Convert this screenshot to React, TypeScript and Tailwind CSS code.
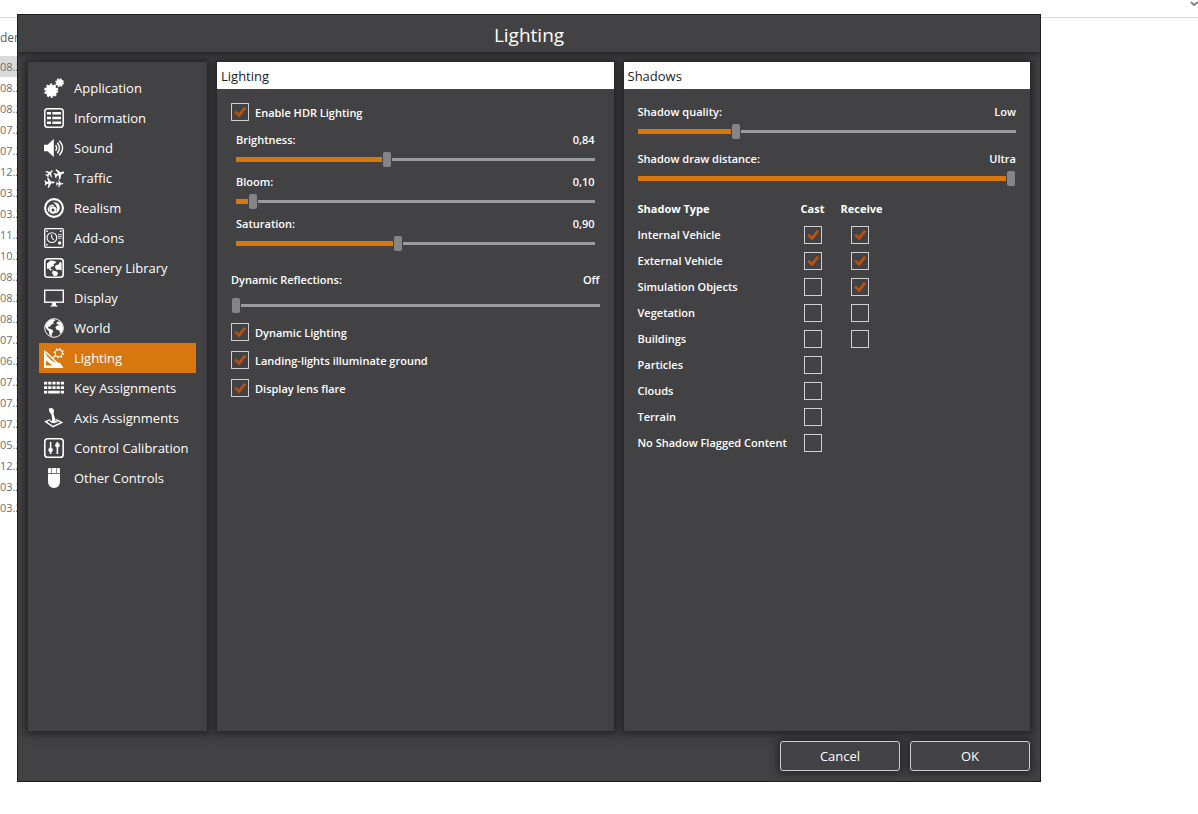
import { useState } from 'react';
import type { ReactNode } from 'react';

const PLANE =
  'M9.3 4.2 L6.4 4 L4 0.2 L2.8 0.2 L4 4 L2.2 4 L1.1 2.7 L0.1 2.7 L0.8 5 L0.1 7.3 L1.1 7.3 L2.2 6 L4 6 L2.8 9.8 L4 9.8 L6.4 6 L9.3 5.8 Q10.6 5 9.3 4.2 Z';

const icons: Record<string, ReactNode> = {
  Application: (
    <>
      <circle cx="7.2" cy="12.6" r="5.8" fill="currentColor" stroke="none" />
      <circle cx="7.2" cy="12.6" r="6.2" strokeWidth="1.8" strokeDasharray="2.2 1.7" />
      <circle cx="15.6" cy="4.6" r="3.4" fill="currentColor" stroke="none" />
      <circle cx="15.6" cy="4.6" r="3.7" strokeWidth="1.3" strokeDasharray="1.7 1.2" />
    </>
  ),
  Information: (
    <>
      <rect x="0.8" y="0.8" width="18.4" height="18.4" rx="2.8" strokeWidth="1.5" />
      <path d="M3 5.3h4M3 10h4M3 14.7h4M8.3 5.3H17M8.3 10H17M8.3 14.7H17" strokeWidth="2.5" />
    </>
  ),
  Sound: (
    <>
      <path d="M0 6.8h3.6L9.8 1v18L3.6 13.2H0z" fill="currentColor" stroke="none" />
      <path d="M11.6 7.2q2 2.8 0 5.6M13.4 4.8q4 5.2 0 10.4M15.4 2.8q6.4 7.2 0 14.4" strokeWidth="1.4" />
    </>
  ),
  Traffic: (
    <g fill="currentColor" stroke="none">
      <path d={PLANE} transform="translate(-0.4 5.4) rotate(-45) scale(0.85)" />
      <path d={PLANE} transform="translate(8.4 2.6) rotate(-20) scale(1.1)" />
      <path d={PLANE} transform="translate(0 9.8) rotate(-4) scale(1.05)" />
      <path d={PLANE} transform="translate(12 12) scale(0.75)" />
    </g>
  ),
  Realism: (
    <>
      <circle cx="10" cy="10" r="8.9" strokeWidth="2.1" />
      <circle cx="9" cy="12" r="2.6" strokeWidth="2.2" />
      <path d="M9.2 4.4C14.6 3.8 17.2 8.6 15.2 12.4Q13.8 15 11.2 15.6C14.4 12.4 13.6 7 9.2 4.4z" fill="currentColor" stroke="none" />
      <path d="M4.8 13.6C3.4 9.4 6 6.6 9.8 7.4" strokeWidth="1.3" />
    </>
  ),
  'Add-ons': (
    <>
      <rect x="0.7" y="0.7" width="18.6" height="18.6" rx="1.2" strokeWidth="1.3" />
      <circle cx="7.9" cy="9.6" r="4.9" strokeWidth="1.1" />
      <path d="M7.4 6.6l.6 3.4 1.8 2" strokeWidth="1.1" />
      <path d="M14 6.6h3.6M14 8.4h3.6M14 10.2h3.6" strokeWidth="0.8" />
      <g fill="currentColor" stroke="none">
        <circle cx="3" cy="3.2" r="0.9" />
        <circle cx="16.8" cy="3.2" r="0.9" />
        <circle cx="3" cy="16.8" r="0.9" />
        <circle cx="15.6" cy="15" r="1.7" />
      </g>
    </>
  ),
  'Scenery Library': (
    <>
      <rect x="0.8" y="0.8" width="18.4" height="18.4" rx="2.8" strokeWidth="1.6" />
      <path
        d="M3 5.4L6.6 2.6L10.6 3L12.4 4.4L9.4 6.2L10.2 8L7.4 8.8L6.2 11L8.6 11.6L6.6 12.8L4.4 10.6L3 11ZM11.6 7.2L14.6 6.4L16.2 3.4L17.6 5V12.6L15.4 11.6L12.8 12L11 9.8ZM8.8 12.4L12.6 13.4L14.2 15.2L12.6 18H9.8L8 15Z"
        fill="currentColor"
        stroke="none"
      />
    </>
  ),
  World: (
    <>
      <circle cx="10" cy="10" r="9.3" strokeWidth="1" />
      <path
        d="M1.2 8.4Q3.4 1.8 9.6 0.9L11.4 2.4L9 4L9.8 5.8L7.2 6.6L6.2 8.6L3.8 8.8L4.6 10.6L8 11.4L9.4 13.4L7.8 15.4L7.6 18.8L5.4 16.8L5 13.6L2.6 11ZM12.2 5.4L14 3.2L16.8 4.2Q19.4 7 19.2 10.8L17.6 14.4L16 15.8L15.4 12.4L12.4 11.6L11.4 9.2L13.2 7.4L15.6 7.2Z"
        fill="currentColor"
        stroke="none"
      />
    </>
  ),
  Display: (
    <>
      <rect x="0.7" y="2.2" width="18.6" height="12" strokeWidth="1.4" />
      <path d="M8 14.5h4v2.3l2 1.7H6l2-1.7z" fill="currentColor" stroke="none" />
    </>
  ),
  Lighting: (
    <>
      <path d="M0 0.8C1.6 8.4 8.6 16 15.8 14.6L19.6 20H0z" fill="currentColor" stroke="none" />
      <path d="M2 12.4V17.6H8.4z" fill="#d9770f" stroke="none" />
      <path d="M1.4 3.6L14.8 16.4M8.2 10.6l3.8-3.4" strokeWidth="1.4" />
      <circle cx="14.8" cy="5.2" r="3.6" strokeWidth="1.1" />
      <circle cx="14.8" cy="5.2" r="4.6" strokeWidth="1.2" strokeDasharray="1.4 2.21" />
    </>
  ),
  'Key Assignments': (
    <path
      d="M0 5.2h3.2M4.2 5.2h3.2M8.4 5.2h3.2M12.6 5.2h3.2M16.8 5.2H20M0 9.7h3.2M4.2 9.7h3.2M8.4 9.7h3.2M12.6 9.7h3.2M16.8 9.7H20M0 14.2h3.2M4.2 14.2h11.6M16.8 14.2H20"
      strokeWidth="2.8"
    />
  ),
  'Axis Assignments': (
    <>
      <path d="M4.8 0.6L8 0L10 2L9.6 6L11.8 12.6L8.4 13.4L7.4 6.6L5.4 4z" fill="currentColor" stroke="none" />
      <path d="M6.4 11.6L1.6 13.6L9 18.6L17.8 14.4L12.2 11.6" strokeWidth="1.4" />
      <path d="M6 13.4q4-1.6 7.4 .4q-3.6 2.4-7.4-.4" fill="currentColor" strokeWidth="0.8" />
    </>
  ),
  'Control Calibration': (
    <>
      <rect x="0.8" y="0.8" width="18.4" height="18.4" rx="2.8" strokeWidth="1.6" />
      <path d="M6.6 4v12M13.4 4v12" strokeWidth="1.6" />
      <circle cx="6.6" cy="12" r="2.3" fill="currentColor" stroke="none" />
      <circle cx="13.4" cy="7.2" r="2.3" fill="currentColor" stroke="none" />
    </>
  ),
  'Other Controls': (
    <path
      d="M4 5V1.4Q4 0 5.4 0H7.4V5zM8 0h4V5H8zM12.6 0h2q1.4 0 1.4 1.4V5h-3.4zM4 5.8h12V13q0 6.8-6 7Q4 19.8 4 13z"
      fill="currentColor"
      stroke="none"
    />
  ),
};

const menu = [
  'Application',
  'Information',
  'Sound',
  'Traffic',
  'Realism',
  'Add-ons',
  'Scenery Library',
  'Display',
  'World',
  'Lighting',
  'Key Assignments',
  'Axis Assignments',
  'Control Calibration',
  'Other Controls',
];

const shadowTypes: { name: string; boxes: boolean[] }[] = [
  { name: 'Internal Vehicle', boxes: [true, true] },
  { name: 'External Vehicle', boxes: [true, true] },
  { name: 'Simulation Objects', boxes: [false, true] },
  { name: 'Vegetation', boxes: [false, false] },
  { name: 'Buildings', boxes: [false, false] },
  { name: 'Particles', boxes: [false] },
  { name: 'Clouds', boxes: [false] },
  { name: 'Terrain', boxes: [false] },
  { name: 'No Shadow Flagged Content', boxes: [false] },
];

const dates = '08 08 08 07 07 12 03 03 11 10 08 08 08 07 06 07 07 07 05 12 03 03'.split(' ');

function MenuIcon({ name }: { name: string }) {
  return (
    <svg viewBox="0 0 20 20" className="size-5 shrink-0" fill="none" stroke="currentColor" aria-hidden="true">
      {icons[name]}
    </svg>
  );
}

function Tick({ initial, label }: { initial: boolean; label?: string }) {
  const [on, setOn] = useState(initial);
  return (
    <span className="grid size-[18px] shrink-0">
      <input
        type="checkbox"
        aria-label={label}
        checked={on}
        onChange={() => setOn(!on)}
        className="col-start-1 row-start-1 size-[18px] appearance-none border border-[#cfcfd1]"
      />
      {on && (
        <svg viewBox="0 0 18 18" className="pointer-events-none col-start-1 row-start-1 size-[18px]" aria-hidden="true">
          <path d="M3 9.6L5.2 7.8L7.8 10.2L13 3.8L15.2 5.4L8.4 14.6z" fill="#b8500f" />
        </svg>
      )}
    </span>
  );
}

function CheckRow({ label }: { label: string }) {
  return (
    <label className="flex items-center gap-1.5 leading-4">
      <Tick initial />
      <span className="pt-0.5">{label}</span>
    </label>
  );
}

type SliderProps = { label: string; text: string; start: number; className?: string; rangeClass?: string };

function Slider({ label, text, start, className = '', rangeClass = 'mt-[3px]' }: SliderProps) {
  const [value, setValue] = useState(start);
  return (
    <label className={`block leading-4 ${className}`}>
      <span className="flex justify-between">
        <span>{label}</span>
        <span>{text}</span>
      </span>
      <input
        type="range"
        min={0}
        max={1000}
        value={value}
        onChange={(e) => setValue(Number(e.target.value))}
        className={`block h-[17px] w-full appearance-none bg-left bg-no-repeat [&::-webkit-slider-thumb]:h-[17px] [&::-webkit-slider-thumb]:w-[10px] [&::-webkit-slider-thumb]:appearance-none [&::-webkit-slider-thumb]:rounded-[3px] [&::-webkit-slider-thumb]:border [&::-webkit-slider-thumb]:border-[#424244] [&::-webkit-slider-thumb]:bg-[#858587] ${rangeClass}`}
        style={{
          backgroundImage: 'linear-gradient(#d9770f, #d9770f), linear-gradient(#9b9b9d, #9b9b9d)',
          backgroundSize: `calc((100% - 10px) * ${value / 1000}) 5px, 100% 3px`,
        }}
      />
    </label>
  );
}

function Panel({ title, children }: { title: string; children: ReactNode }) {
  return (
    <section className="bg-[#424244] shadow-[0_0_8px_3px_#222224]">
      <h2 className="h-[27px] bg-white px-1 text-[13px] leading-[28px] font-normal text-[#1c1c1e]">{title}</h2>
      {children}
    </section>
  );
}

function FileList() {
  return (
    <div className="text-[11px] text-[#6f6f72]">
      <div className="flex h-[18px] justify-end border-b border-[#d9d9d9]">
        <svg viewBox="0 0 8 8" className="size-2 text-[#808080]" fill="none" stroke="currentColor" strokeWidth="2" aria-hidden="true">
          <path d="M1 2l3 3 4-3" />
        </svg>
      </div>
      <div className="h-[38px] text-[12px] leading-10 text-[#4c607a]">der</div>
      <ul className="w-6">
        {dates.map((d, i) => (
          <li key={i} className={`h-[21px] leading-[21px] ${i === 0 ? 'bg-[#d9d9d9]' : ''}`}>
            {d}.2
          </li>
        ))}
      </ul>
    </div>
  );
}

export default function App() {
  const [active, setActive] = useState('Lighting');

  return (
    <div className="relative min-h-screen bg-white font-['Open_Sans','Noto_Sans',sans-serif]">
      <FileList />
      <main className="absolute top-[14px] right-[157px] bottom-[32px] left-[17px] flex flex-col overflow-hidden border border-[#1f1f21] bg-[#424244] text-white">
        <h1 className="h-[37px] shrink-0 bg-[#424244] text-center text-[19px] leading-[40px] shadow-[0_1px_6px_1px_#222224]">
          Lighting
        </h1>
        <div className="grid grow grid-cols-[179px_397fr_407fr] gap-x-[10px] px-[10px] pt-[10px] text-[11px] font-semibold">
          <nav className="bg-[#424244] p-[11px] text-[13px] font-normal shadow-[0_0_8px_3px_#222224]">
            {menu.map((item) => (
              <button
                key={item}
                onClick={() => setActive(item)}
                className={`flex h-[30px] w-full items-center gap-[10px] px-[5px] whitespace-nowrap ${
                  item === active ? 'bg-[#d9770f]' : ''
                }`}
              >
                <MenuIcon name={item} />
                <span className="pt-0.5">{item}</span>
              </button>
            ))}
          </nav>

          <Panel title="Lighting">
            <div className="px-[14px] pt-[14px]">
              <CheckRow label="Enable HDR Lighting" />
              <div className="mt-[11px] flex flex-col gap-[6px] px-[5px]">
                <Slider label="Brightness:" text="0,84" start={420} />
                <Slider label="Bloom:" text="0,10" start={34} />
                <Slider label="Saturation:" text="0,90" start={450} />
              </div>
              <Slider label="Dynamic Reflections:" text="Off" start={0} className="mt-5" rangeClass="mt-[9px]" />
              <div className="mt-[9px] flex flex-col gap-[10px]">
                <CheckRow label="Dynamic Lighting" />
                <CheckRow label="Landing-lights illuminate ground" />
                <CheckRow label="Display lens flare" />
              </div>
            </div>
          </Panel>

          <Panel title="Shadows">
            <div className="px-[14px] pt-[15px]">
              <Slider label="Shadow quality:" text="Low" start={253} />
              <Slider label="Shadow draw distance:" text="Ultra" start={1000} className="mt-[11px]" />
              <table className="mt-[10px] table-fixed">
                <thead>
                  <tr className="h-[25px] font-bold">
                    <th className="w-[156px] text-left">Shadow Type</th>
                    <th className="w-[38px]">Cast</th>
                    <th className="w-[56px] pl-1">Receive</th>
                  </tr>
                </thead>
                <tbody>
                  {shadowTypes.map(({ name, boxes }) => (
                    <tr key={name} className="h-[26px]">
                      <td className="whitespace-nowrap">{name}</td>
                      {[0, 1].map((col) => (
                        <td key={col}>
                          {col < boxes.length && (
                            <div className="flex justify-center">
                              <Tick initial={boxes[col]} label={`${name} ${col === 0 ? 'cast' : 'receive'}`} />
                            </div>
                          )}
                        </td>
                      ))}
                    </tr>
                  ))}
                </tbody>
              </table>
            </div>
          </Panel>
        </div>
        <footer className="flex justify-end gap-[10px] p-[10px] text-[13px]">
          <button className="h-[30px] w-[120px] rounded-[3px] border border-[#cfcfd1] bg-[#424244] pt-0.5 shadow-[0_0_8px_2px_#222224]">
            Cancel
          </button>
          <button className="h-[30px] w-[120px] rounded-[3px] border border-[#cfcfd1] bg-[#424244] pt-0.5 shadow-[0_0_8px_2px_#222224]">
            OK
          </button>
        </footer>
      </main>
    </div>
  );
}
